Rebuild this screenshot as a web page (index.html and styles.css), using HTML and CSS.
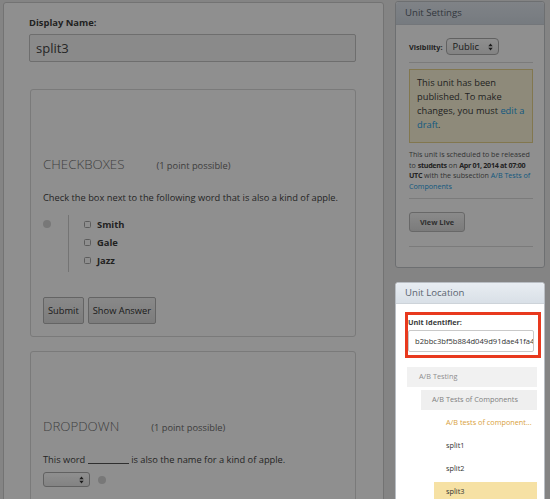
FILE: index.html
```html
<!DOCTYPE html>
<html>
<head>
<meta charset="utf-8">
<link rel="stylesheet" href="styles.css">
</head>
<body>
<div class="page">
  <main class="editor">
    <label class="field-label">Display Name:</label>
    <div class="text-input">split3</div>

    <section class="problem">
      <h2 class="problem-title">Checkboxes<span class="points">(1 point possible)</span></h2>
      <p class="prompt">Check the box next to the following word that is also a kind of apple.</p>
      <div class="choice-group">
        <span class="status-dot"></span>
        <ul class="choices">
          <li><span class="cb"></span>Smith</li>
          <li><span class="cb"></span>Gale</li>
          <li><span class="cb"></span>Jazz</li>
        </ul>
      </div>
      <div class="actions">
        <button class="btn">Submit</button>
        <button class="btn">Show Answer</button>
      </div>
    </section>

    <section class="problem problem-last">
      <h2 class="problem-title">Dropdown<span class="points">(1 point possible)</span></h2>
      <p class="prompt">This word <span class="blank"></span> is also the name for a kind of apple.</p>
      <div class="dropdown-row">
        <span class="select-box select-small">
          <svg class="arrows" width="5" height="8" viewBox="0 0 5 8"><path d="M0.3 3.2 L2.5 0.6 L4.7 3.2 Z M0.3 4.8 L2.5 7.4 L4.7 4.8 Z" fill="#333"/></svg>
        </span>
        <span class="status-dot dot-inline"></span>
      </div>
    </section>
  </main>

  <aside class="sidebar">
    <section class="panel settings">
      <header class="panel-head">Unit Settings</header>
      <div class="panel-body settings-body">
        <div class="visibility">
          <span class="small-label">Visibility:</span>
          <span class="select-box select-public">Public
            <svg class="arrows" width="5" height="8" viewBox="0 0 5 8"><path d="M0.3 3.2 L2.5 0.6 L4.7 3.2 Z M0.3 4.8 L2.5 7.4 L4.7 4.8 Z" fill="#333"/></svg>
          </span>
        </div>
        <hr class="rule">
        <div class="notice">This unit has been published. To make changes, you must <a class="link">edit a draft</a>.</div>
        <p class="schedule">This unit is scheduled to be released to <b>students</b> on <b>Apr 01, 2014 at 07:00 UTC</b> with the subsection <a class="link">A/B Tests of Components</a></p>
        <hr class="rule rule-b">
        <button class="view-live">View Live</button>
        <hr class="rule rule-c">
      </div>
    </section>

    <section class="panel location">
      <header class="panel-head">Unit Location</header>
      <div class="location-body">
        <div class="highlight">
          <span class="small-label block">Unit Identifier:</span>
          <div class="id-input">b2bbc3bf5b884d049d91dae41fa4c3c4</div>
        </div>
        <ol class="tree">
          <li class="node lvl0"><span class="row">A/B Testing</span>
            <ol>
              <li class="node lvl1"><span class="row">A/B Tests of Components</span>
                <ol>
                  <li class="node lvl2"><span class="row sub">A/B tests of component...</span></li>
                  <li class="node lvl2"><span class="row unit">split1</span></li>
                  <li class="node lvl2"><span class="row unit">split2</span></li>
                  <li class="node lvl2"><span class="row unit current">split3</span></li>
                </ol>
              </li>
            </ol>
          </li>
        </ol>
      </div>
    </section>
  </aside>
</div>
<div class="dim"></div>
</body>
</html>
```

FILE: styles.css
```css
html, body {
  margin: 0;
  padding: 0;
  height: 499px;
  overflow: hidden;
}
body {
  background: #ececec;
  font-family: "Open Sans", "DejaVu Sans", sans-serif;
  color: #3c3c3c;
}
.page {
  display: flex;
  align-items: flex-start;
}

/* ---------- left editor ---------- */
.editor {
  width: 381px;
  box-sizing: border-box;
  margin: 2px 0 0 3px;
  padding: 13px 27px 0 25px;
  background: #fff;
  border: 1px solid #cdcdcd;
  border-radius: 3px;
}
.field-label {
  display: block;
  font-weight: 700;
  font-size: 9.4px;
  line-height: 13px;
  color: #3c3c3c;
}
.text-input {
  margin-top: 5px;
  height: 28px;
  box-sizing: border-box;
  border: 1px solid #c4c4c4;
  border-radius: 2px;
  background: #f7f7f7;
  padding: 0 6px;
  font-size: 13px;
  line-height: 26px;
  color: #444;
}
.problem {
  margin: 27px 0 0 1px;
  border: 1px solid #d9d9d9;
  border-radius: 3px;
  padding: 65px 12px 12px;
}
.problem-last {
  margin-top: 14px;
  min-height: 200px;
}
.problem-title {
  margin: 0;
  font-weight: 300;
  font-size: 13.3px;
  line-height: 18px;
  text-transform: uppercase;
  color: #737373;
}
.points {
  margin-left: 32px;
  font-size: 9.3px;
  text-transform: none;
  font-weight: 400;
  color: #6e6e6e;
}
.prompt {
  margin: 16px 0 0;
  font-size: 9.3px;
  line-height: 13px;
  color: #444;
}
.blank {
  display: inline-block;
  width: 41px;
  border-bottom: 1px solid #555;
  vertical-align: -1px;
}
.choice-group {
  margin-top: 11px;
  display: flex;
  align-items: flex-start;
}
.status-dot {
  display: block;
  width: 8px;
  height: 8px;
  border-radius: 50%;
  background: #d6d6d6;
  margin-top: 5px;
}
.choices {
  list-style: none;
  margin: 0 0 0 17px;
  padding: 0 0 3px 15px;
  border-left: 1px solid #cfcfcf;
}
.choices li {
  display: flex;
  align-items: center;
  height: 18px;
  font-weight: 700;
  font-size: 9.4px;
  color: #3c3c3c;
}
.cb {
  width: 7px;
  height: 7px;
  box-sizing: border-box;
  border: 1px solid #a5a5a5;
  border-radius: 1.5px;
  background: #fff;
  margin-right: 6px;
}
.actions {
  margin-top: 25px;
  display: flex;
  gap: 4px;
}
.btn {
  height: 27px;
  padding: 0 4px;
  font-family: "Open Sans", sans-serif;
  font-size: 9.3px;
  color: #333;
  background: linear-gradient(#f4f4f4, #dedede);
  border: 1px solid #b3b3b3;
  border-radius: 2px;
}
.dropdown-row {
  margin-top: 6px;
  display: flex;
  align-items: center;
}
.select-box {
  position: relative;
  display: inline-flex;
  align-items: center;
  box-sizing: border-box;
  border: 1px solid #adadad;
  border-radius: 3px;
  background: linear-gradient(#ffffff, #e9e9e9);
}
.select-box .arrows {
  position: absolute;
  right: 5px;
  top: 50%;
  margin-top: -4px;
}
.select-small {
  width: 47px;
  height: 15px;
}
.dot-inline {
  margin: 0 0 0 8px;
}

/* ---------- sidebar ---------- */
.sidebar {
  width: 150px;
  margin-left: 11px;
}
.panel {
  background: #fff;
  border: 1px solid #c3c6c9;
  border-radius: 3px;
}
.panel-head {
  height: 21px;
  padding-left: 9px;
  font-size: 9.6px;
  line-height: 21px;
  color: #5a6470;
  background: linear-gradient(#e8edf2, #d9e0e7);
  border-bottom: 1px solid #cdd3d9;
  border-radius: 3px 3px 0 0;
}
.settings {
  margin-top: 1px;
}
.settings .panel-head {
  height: 22px;
  line-height: 22px;
  background: linear-gradient(#e3e9f0, #d3dbe4);
}
.settings-body {
  padding: 13px 11px 20px 13px;
}
.visibility {
  display: flex;
  align-items: center;
}
.small-label {
  font-weight: 700;
  font-size: 7.3px;
  line-height: 10px;
  color: #3c3c3c;
}
.small-label.block {
  display: block;
}
.select-public {
  margin-left: 3px;
  width: 53px;
  height: 17px;
  border-radius: 4px;
  padding-left: 6px;
  font-size: 9.4px;
  color: #333;
}
.rule {
  margin: 7px 0 0;
  border: 0;
  border-top: 1px solid #dcdcdc;
  height: 0;
}
.notice {
  margin-top: 6px;
  border: 1px solid #e8d48e;
  background: #fdf7da;
  padding: 6px 7px 10px;
  font-size: 9.3px;
  line-height: 14px;
  color: #3c3c3c;
}
.link {
  color: #1d9ee3;
}
.schedule {
  margin: 6px 0 0;
  font-size: 7.15px;
  line-height: 10.5px;
  color: #5c5c5c;
}
.schedule b {
  color: #3c3c3c;
  letter-spacing: -0.3px;
}
.view-live {
  display: block;
  margin-top: 13px;
  width: 56px;
  height: 20px;
  padding: 0;
  font-family: "Open Sans", sans-serif;
  font-weight: 700;
  font-size: 7.3px;
  color: #555;
  background: linear-gradient(#f7f7f7, #dcdcdc);
  border: 1px solid #b9b9b9;
  border-radius: 3px;
}
.rule-c {
  margin-top: 14px;
}

.location {
  position: relative;
  z-index: 20;
  margin-top: 14px;
  height: 240px;
  border-color: #b9bec4;
}
.location .panel-head {
  height: 20px;
  line-height: 19px;
}
.location-body {
  padding: 8px 3px 0 9px;
}
.highlight {
  border: 3px solid #e8391e;
  padding: 2px 4px 3px 0;
}
.id-input {
  margin-top: 3px;
  height: 22px;
  box-sizing: border-box;
  border: 1px solid #c9c9c9;
  border-radius: 2px;
  padding-left: 6px;
  font-size: 7.6px;
  line-height: 20px;
  color: #333;
  white-space: nowrap;
  overflow: hidden;
}
.tree, .tree ol {
  list-style: none;
  margin: 0;
  padding: 0;
}
.tree {
  margin: 9px 4px 0 2px;
}
.row {
  display: block;
  height: 20px;
  margin-bottom: 3px;
  font-size: 7.3px;
  line-height: 18px;
}
.lvl0 > .row {
  padding-left: 12px;
  background: #f1f1f1;
  color: #8e8e8e;
}
.lvl1 {
  margin-left: 14px;
}
.lvl1 > .row {
  padding-left: 11px;
  background: #efefef;
  color: #808080;
}
.lvl2 {
  margin-left: 13px;
}
.lvl2 > .row {
  padding-left: 12px;
}
.row.sub {
  color: #d9a13c;
}
.row.unit {
  color: #333;
}
.row.current {
  background: #f6e1a4;
}

.dim {
  position: fixed;
  inset: 0;
  z-index: 10;
  background: rgba(0, 0, 0, 0.44);
}
```
